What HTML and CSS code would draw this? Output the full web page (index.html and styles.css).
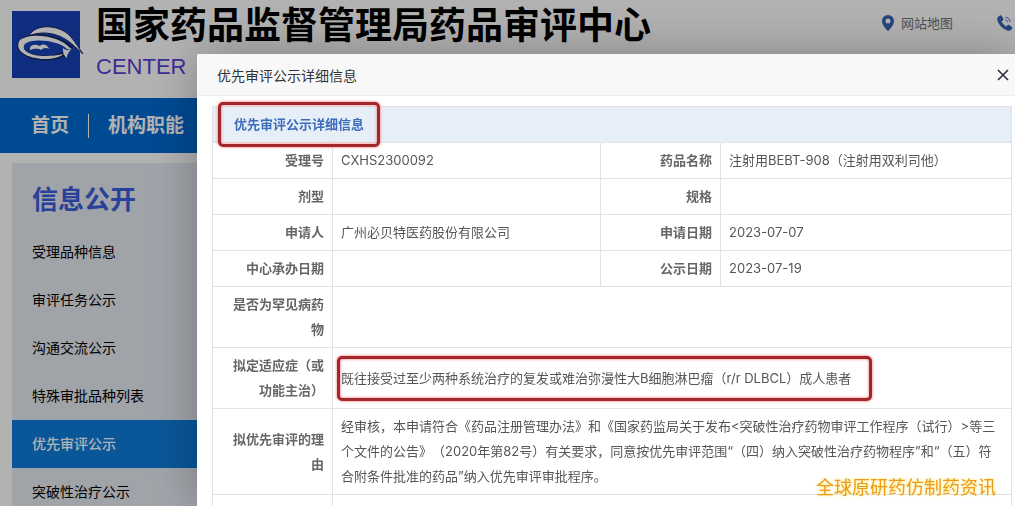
FILE: index.html
```
<!DOCTYPE html>
<html lang="zh-CN">
<head>
    <meta charset="UTF-8">
    <meta name="viewport" content="width=device-width, initial-scale=1">
    <title>优先审评公示</title>
    <link rel="stylesheet" href="styles.css">
</head>
<body>
<header class="header">
    <svg class="logo" viewBox="0 0 72 68" aria-hidden="true">
        <rect width="68" height="67" fill="#1742b7"/>
        <path d="M17 25C23 12 48 13 59 26C64 32 67 37 71 43C63 36 57 29 47 25C37 21 26 21 17 25Z" fill="#fff" stroke="#15245e" stroke-width="1"/>
        <path d="M59 38C48 26 20 22 10 30C2 38 16 47 33 47C41 47 48 45 52 43" fill="none" stroke="#15245e" stroke-width="5"/>
        <path d="M59 38C48 24 18 21 8 29C1 39 15 48 33 48C41 48 48 46 52 43C46 44 40 45 33 45C18 45 8 39 13 33C20 27 46 29 55 38Z" fill="#fff"/>
        <path d="M51 37C54 40 57 39 60 37C56 42 55 44 55 47C51 44 51 41 51 37Z" fill="#fff"/>
        <path d="M18 37C19 33 24 33 28 35C31 32 36 34 37 38C34 36 31 37 29 39C25 37 22 38 18 39Z" fill="#fff"/>
    </svg>
    <div class="site-name">
        <h1>国家药品监督管理局药品审评中心</h1>
        <p>CENTER</p>
    </div>
    <div class="tools">
        <a href="#map">
            <svg width="12" height="16" viewBox="0 0 12 16" aria-hidden="true">
                <path fill="#3364b7" fill-rule="evenodd" d="M6 0a6 6 0 0 0-6 6c0 4 4 8 6 10 2-2 6-6 6-10a6 6 0 0 0-6-6zm0 3.400a2.500 2.500 0 1 1 0 5 2.500 2.500 0 0 1 0-5z"/>
            </svg>
            网站地图
        </a>
        <a href="#tel" aria-label="联系电话">
            <svg width="16" height="16" viewBox="0 0 16 16" aria-hidden="true">
                <path fill="#3364b7" d="M1.500 1.500 3 .5c.8-.4 1.400-.2 1.800.5l1.400 2.600c.4.700.2 1.300-.4 1.800L4.600 6.500c.8 2 2.600 3.900 4.700 4.900l1.200-1.200c.5-.5 1.100-.6 1.700-.2l2.500 1.700c.7.500.8 1.100.4 1.700l-1.200 1.600c-.8 1-2.500.9-4.200.2C5.200 13.600 1.800 9.800.4 5.500 0 3.900.3 2.400 1.500 1.500z"/>
                <path fill="none" stroke="#3364b7" stroke-width="1" d="M8.500 5c1.200.2 2 1 2.300 2.200M8.700 2.400c2.500.2 4.200 2 4.500 4.500"/>
            </svg>
        </a>
    </div>
</header>
<nav class="nav">
    <a href="#home">首页</a>
    <a href="#org">机构职能</a>
</nav>
<aside class="sidebar">
    <h2>信息公开</h2>
    <a href="#1">受理品种信息</a>
    <a href="#2">审评任务公示</a>
    <a href="#3">沟通交流公示</a>
    <a href="#4">特殊审批品种列表</a>
    <a href="#5" class="active">优先审评公示</a>
    <a href="#6">突破性治疗公示</a>
</aside>

<div class="shade"></div>
<div class="layer" role="dialog" aria-labelledby="layer-title">
    <div class="layer-title">
        <span id="layer-title">优先审评公示详细信息</span>
        <button type="button" class="close" aria-label="关闭">
            <svg width="12" height="12" viewBox="0 0 12 12" aria-hidden="true">
                <path d="M1 1l10 10M11 1L1 11" fill="none" stroke="#2d2c3b" stroke-width="1.600"/>
            </svg>
        </button>
    </div>
    <div class="layer-content">
        <table class="detail">
            <colgroup>
                <col class="col-label">
                <col class="col-left">
                <col class="col-label">
                <col>
            </colgroup>
            <thead>
                <tr>
                    <th colspan="4"><span class="mark mark-title">优先审评公示详细信息</span></th>
                </tr>
            </thead>
            <tbody>
                <tr>
                    <th>受理号</th>
                    <td>CXHS2300092</td>
                    <th>药品名称</th>
                    <td>注射用BEBT-908（注射用双利司他）</td>
                </tr>
                <tr>
                    <th>剂型</th>
                    <td></td>
                    <th>规格</th>
                    <td></td>
                </tr>
                <tr>
                    <th>申请人</th>
                    <td>广州必贝特医药股份有限公司</td>
                    <th>申请日期</th>
                    <td>2023-07-07</td>
                </tr>
                <tr>
                    <th>中心承办日期</th>
                    <td></td>
                    <th>公示日期</th>
                    <td>2023-07-19</td>
                </tr>
                <tr>
                    <th>是否为罕见病药物</th>
                    <td colspan="3"></td>
                </tr>
                <tr>
                    <th>拟定适应症（或功能主治）</th>
                    <td colspan="3"><span class="mark mark-text">既往接受过至少两种系统治疗的复发或难治弥漫性大B细胞淋巴瘤（r/r DLBCL）成人患者</span></td>
                </tr>
                <tr>
                    <th>拟优先审评的理由</th>
                    <td colspan="3">经审核，本申请符合《药品注册管理办法》和《国家药监局关于发布&lt;突破性治疗药物审评工作程序（试行）&gt;等三个文件的公告》（2020年第82号）有关要求，同意按优先审评范围“（四）纳入突破性治疗药物程序”和“（五）符合附条件批准的药品”纳入优先审评审批程序。</td>
                </tr>
                <tr>
                    <th></th>
                    <td colspan="3"></td>
                </tr>
            </tbody>
        </table>
    </div>
</div>
<div class="watermark">全球原研药仿制药资讯</div>
</body>
</html>
```

FILE: styles.css
```
*{
    box-sizing:border-box;
}
html,body{
    height:100%;
}
body{
    margin:0;
    overflow:hidden;
    background:#fff;
    color:#000;
    font-family:Inter,"Noto Sans CJK SC",sans-serif;
    font-size:14px;
    text-spacing-trim:space-all;
}
h1,h2,p{
    margin:0;
}
a{
    color:inherit;
    text-decoration:none;
}
.header{
    display:flex;
    align-items:flex-start;
    height:98px;
    padding-left:12px;
}
.logo{
    flex:none;
    width:72px;
    height:68px;
    margin-top:11px;
}
.site-name{
    margin-left:12px;
    white-space:nowrap;
}
.site-name h1{
    font-size:37px;
    line-height:52px;
    font-weight:700;
}
.site-name p{
    color:#5d40d2;
    font-family:"Liberation Sans",sans-serif;
    font-size:22px;
    line-height:30px;
}
.tools{
    display:flex;
    gap:44px;
    margin-left:auto;
    padding-top:11px;
    padding-right:2px;
    color:#737373;
    font-size:13px;
    line-height:24px;
}
.tools a{
    display:flex;
    align-items:center;
    gap:7px;
}
.nav{
    display:flex;
    align-items:center;
    height:55px;
    padding-left:12px;
    background:#006ad2;
    color:#fff;
    font-size:19px;
    font-weight:700;
}
.nav a{
    padding:0 19px;
    line-height:24px;
}
.nav a + a{
    border-left:1px solid #fff;
}
.sidebar{
    width:240px;
    margin:10px 0 0 12px;
    background:#e6ebf3;
}
.sidebar h2{
    padding:18px 20px 9px;
    color:#3d5edc;
    font-size:26px;
    line-height:38px;
    font-weight:700;
}
.sidebar a{
    display:block;
    padding:0 20px;
    line-height:48px;
}
.sidebar .active{
    background:#0e7cdb;
    color:#fff;
    font-weight:500;
}

/* dialog */
.shade{
    position:fixed;
    inset:0;
    background:rgba(0,0,0,0.3);
}
.layer{
    position:fixed;
    top:54px;
    left:197px;
    right:0;
    bottom:0;
    overflow:hidden;
    border-radius:2px 0 0 0;
    background:#fff;
    box-shadow:1px 1px 50px rgba(0,0,0,0.3);
}
.layer-title{
    display:flex;
    align-items:center;
    justify-content:space-between;
    height:42px;
    padding:0 6px 0 20px;
    border-bottom:1px solid #eee;
    background:#f8f8f8;
    color:#333;
}
.close{
    display:flex;
    padding:0;
    border:0;
    background:none;
    cursor:pointer;
}
.layer-content{
    padding:10px 3px 0 15px;
}
.detail{
    width:100%;
    table-layout:fixed;
    border-collapse:collapse;
    color:#555;
    font-size:13px;
    line-height:25px;
}
.col-label{
    width:120px;
}
.col-left{
    width:268px;
}
.detail th,.detail td{
    height:36px;
    padding:5px 8px;
    border:1px solid #e2e2e2;
}
.detail th{
    color:#666;
    font-weight:700;
    text-align:right;
}
.detail td{
    text-align:left;
}
.detail thead th{
    padding-left:21px;
    background:#e6eef8;
    color:#3d6cba;
    text-align:left;
}

/* red frames round the key facts */
.mark{
    position:relative;
    display:inline-block;
    vertical-align:top;
}
.mark::after{
    content:"";
    position:absolute;
    inset:-10px -16px;
    border:3px solid #a3262a;
    border-radius:5px;
    box-shadow:0 0 3px #f66,inset 0 0 3px #f66;
}
.mark-text::after{
    inset:-10px -21px -10px -4px;
}
.watermark{
    position:fixed;
    right:19px;
    bottom:5px;
    color:#eb9c1c;
    font-size:18px;
    line-height:26px;
    text-shadow:0 0 3px #ffe45c;
}
```
